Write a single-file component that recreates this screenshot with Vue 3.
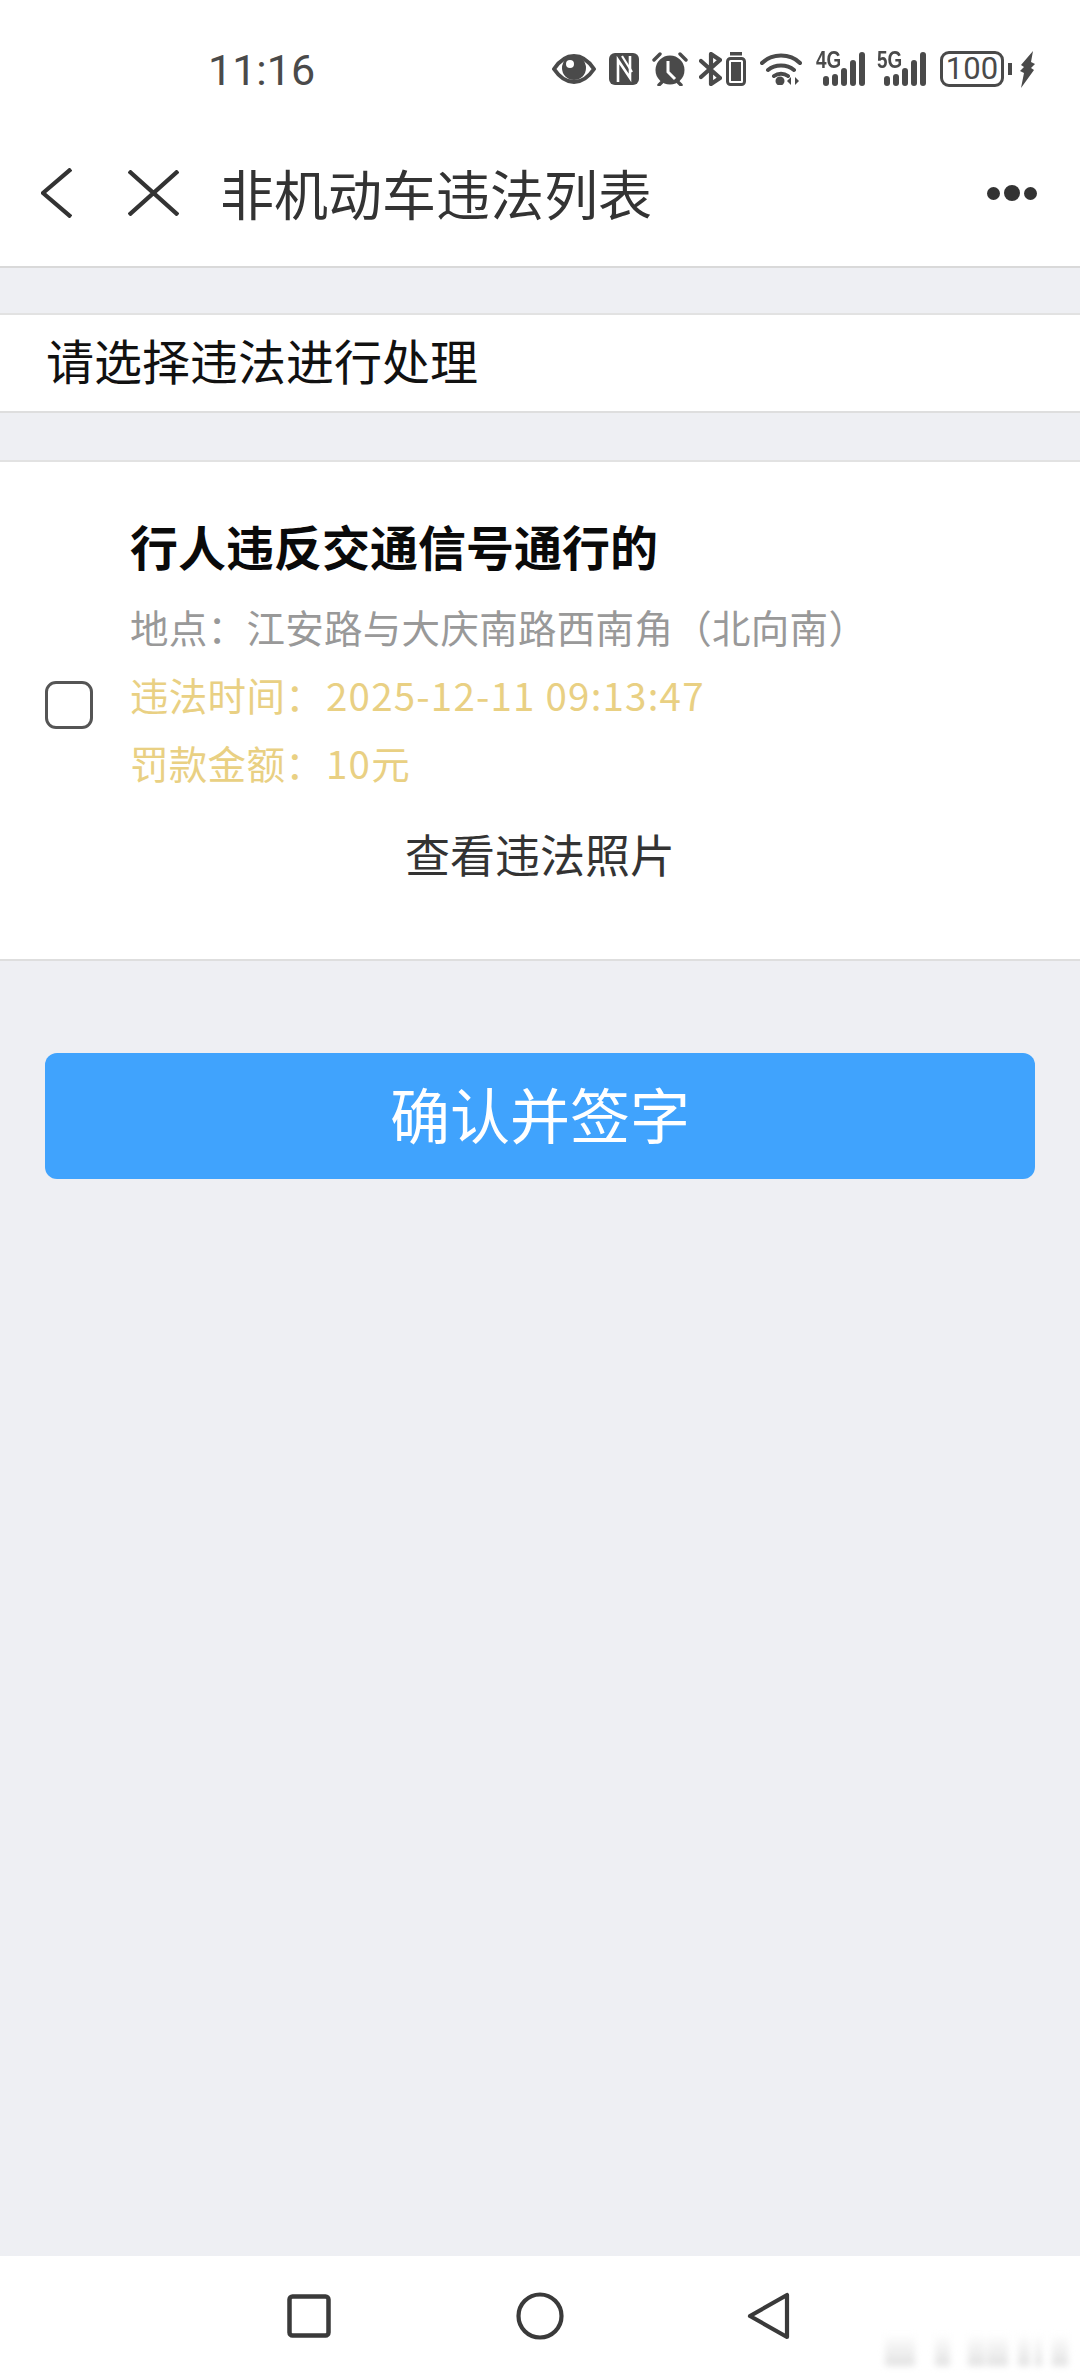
<template>
  <div class="page">
    <header class="top">
      <!-- status bar -->
      <div class="status">
        <span class="time">11:16</span>
        <div class="status-icons">
          <svg class="ic-eye" width="44" height="30" viewBox="0 0 44 30">
            <path d="M2 15C8 6 14 2 22 2s14 4 20 13c-6 9-12 13-20 13S8 24 2 15z" fill="none" stroke="#4a4a4a" stroke-width="4" stroke-linejoin="round" />
            <circle cx="22" cy="14" r="12" fill="#4a4a4a" />
            <circle cx="18" cy="10" r="4" fill="#fff" />
          </svg>
          <svg class="ic-nfc" width="30" height="32" viewBox="0 0 30 32">
            <rect width="30" height="32" rx="6" fill="#4a4a4a" />
            <path d="M9 29V7l12 18V3" fill="none" stroke="#fff" stroke-width="2.600" />
            <path d="M13 3l10 16" fill="none" stroke="#fff" stroke-width="2.200" />
          </svg>
          <svg class="ic-alarm" width="36" height="34" viewBox="0 0 36 34">
            <circle cx="18" cy="18" r="14.500" fill="#4a4a4a" />
            <path d="M16 9v11l7 7" fill="none" stroke="#fff" stroke-width="3" />
            <path d="M2 8l6-6M34 8l-6-6M7 33l4-4M29 33l-4-4" stroke="#4a4a4a" stroke-width="3.400" stroke-linecap="round" />
          </svg>
          <svg class="ic-bt" width="23" height="34" viewBox="0 0 23 34">
            <path d="M2 9l19 17-9 6V19M12 14V2l9 6L2 25" fill="none" stroke="#4a4a4a" stroke-width="4.200" stroke-linejoin="round" stroke-linecap="round" />
          </svg>
          <svg class="ic-saver" width="20" height="34" viewBox="0 0 20 34">
            <rect x="4" y="0" width="12" height="3.500" fill="#4a4a4a" />
            <rect x="1.500" y="6.500" width="17" height="26" rx="3" fill="none" stroke="#4a4a4a" stroke-width="3" />
            <rect x="5" y="10" width="10" height="19" fill="#4a4a4a" />
          </svg>
          <svg class="ic-wifi" width="42" height="32" viewBox="0 0 42 32">
            <path d="M2 10C12 0 30 0 40 10M8 17c7-6 19-6 26 0M14 23c4-3 10-3 14 0" fill="none" stroke="#4a4a4a" stroke-width="4" stroke-linecap="round" />
            <circle cx="20" cy="28" r="4.500" fill="#4a4a4a" />
            <path d="M31 24v8l-4-4zM35 24v8l4-4z" fill="#4a4a4a" />
          </svg>
          <div v-for="net in networks" :key="net" class="signal">
            <span class="net">{{ net }}</span>
            <i v-for="h in barHeights" :key="h" class="bar" :style="{ height: h + 'px' }"></i>
          </div>
          <div class="battery"><span>100</span></div>
          <i class="nub"></i>
          <svg class="ic-bolt" width="16" height="37" viewBox="0 0 16 37">
            <path d="M14 0L2 14l3 2-4 4 4 2-3 15 13-18-3-2 4-4-4-2z" fill="#4a4a4a" />
          </svg>
        </div>
      </div>
      <!-- title bar -->
      <div class="nav">
        <svg class="back" width="31" height="50" viewBox="0 0 31 50">
          <path d="M30 1L2 25l28 24" fill="none" stroke="#333" stroke-width="4.200" />
        </svg>
        <svg class="close" width="51" height="46" viewBox="0 0 51 46">
          <path d="M1 1l49 44M50 1L1 45" fill="none" stroke="#333" stroke-width="4.200" />
        </svg>
        <h1 class="title">非机动车违法列表</h1>
        <div class="more"><i></i><i class="mid"></i><i></i></div>
      </div>
    </header>

    <main class="main">
      <div class="hint">请选择违法进行处理</div>

      <section class="card">
        <span class="check"></span>
        <div class="info">
          <div class="reason">行人违反交通信号通行的</div>
          <div class="line place">地点：江安路与大庆南路西南角（北向南）</div>
          <div class="line warn">违法时间：<span class="num">2025-12-11 09:13:47</span></div>
          <div class="line warn">罚款金额：<span class="num">10</span>元</div>
        </div>
        <div class="photos">查看违法照片</div>
      </section>

      <button class="confirm" type="button">确认并签字</button>
    </main>

    <footer class="sysbar">
      <svg width="44" height="44" viewBox="0 0 44 44">
        <rect x="2.500" y="2.500" width="39" height="39" rx="3" fill="none" stroke="#3a3a3a" stroke-width="4.500" />
      </svg>
      <svg width="48" height="48" viewBox="0 0 48 48">
        <circle cx="24" cy="24" r="21.500" fill="none" stroke="#3a3a3a" stroke-width="4.200" />
      </svg>
      <svg width="43" height="48" viewBox="0 0 43 48">
        <path d="M40 3v42L3 24z" fill="none" stroke="#3a3a3a" stroke-width="4.200" stroke-linejoin="round" />
      </svg>
      <div class="mark">
        <i v-for="m in marks" :key="m.x + '-' + m.w" :style="{ width: m.w + 'px', marginLeft: m.x + 'px' }"></i>
      </div>
    </footer>
  </div>
</template>

<script setup>
const networks = ["4G", "5G"];
const barHeights = [10, 12, 18, 26, 34];
const marks = [
  { x: 0, w: 30 },
  { x: 20, w: 15 },
  { x: 18, w: 17 },
  { x: 2, w: 21 },
  { x: 10, w: 12 },
  { x: 5, w: 7 },
  { x: 10, w: 16 }
];
</script>

<style>
html,
body {
  margin: 0;
  background: #eeeff3;
}
</style>

<style scoped>
.page {
  width: 1080px;
  height: 2376px;
  display: flex;
  flex-direction: column;
  background: #eeeff3;
  font-family: "Noto Sans CJK SC", "Noto Sans", sans-serif;
}

/* ---------- top ---------- */
.top {
  height: 268px;
  box-sizing: border-box;
  background: #fff;
  border-bottom: 2px solid #d9d9d9;
}

.status {
  height: 100px;
  box-sizing: border-box;
  padding: 40px 45px 0 208px;
  display: flex;
  align-items: center;
  justify-content: space-between;
}

.time {
  font-family: Roboto, sans-serif;
  font-size: 43px;
  line-height: 60px;
  color: #4a4a4a;
}

.status-icons {
  display: flex;
  align-items: center;
  margin-top: -2px;
}

.ic-nfc { margin-left: 13px; }
.ic-alarm { margin-left: 13px; }
.ic-bt { margin-left: 11px; }
.ic-saver { margin-left: 4px; }
.ic-wifi { margin-left: 14px; }

.signal {
  position: relative;
  width: 49px;
  height: 34px;
  margin-left: 14px;
  display: flex;
  align-items: flex-end;
  justify-content: space-between;
  padding-left: 7px;
  box-sizing: border-box;
}

.signal + .signal {
  margin-left: 12px;
}

.net {
  position: absolute;
  left: 0;
  top: -3px;
  font-family: "Liberation Sans", sans-serif;
  font-size: 23px;
  line-height: 22px;
  font-weight: 700;
  color: #4a4a4a;
  transform: scaleX(0.82);
  transform-origin: left;
}

.bar {
  width: 6px;
  border-radius: 3px;
  background: #4a4a4a;
}

.battery {
  width: 64px;
  height: 36px;
  margin-left: 14px;
  box-sizing: border-box;
  border: 3.500px solid #4a4a4a;
  border-radius: 9px;
  display: flex;
  align-items: center;
  justify-content: center;
  color: #4a4a4a;
  font-family: Roboto, sans-serif;
  font-size: 31px;
  line-height: 30px;
}

.nub {
  width: 4px;
  height: 12px;
  margin-left: 4px;
  background: #4a4a4a;
}

.ic-bolt {
  margin-left: 7px;
}

.nav {
  height: 166px;
  box-sizing: border-box;
  display: flex;
  align-items: center;
  padding: 20px 43px 0 41px;
}

.close {
  margin-left: 56px;
}

.title {
  margin: 0 0 0 41px;
  flex: 1;
  font-size: 54px;
  font-weight: 400;
  line-height: 72px;
  color: #333;
}

.more {
  display: flex;
  align-items: center;
  gap: 4px;
}

.more i {
  width: 13px;
  height: 13px;
  border-radius: 50%;
  background: #333;
}

.more i.mid {
  width: 16px;
  height: 16px;
}

/* ---------- main ---------- */
.main {
  flex: 1;
  padding-top: 45px;
}

.hint {
  height: 100px;
  box-sizing: border-box;
  padding-left: 46px;
  background: #fff;
  border-top: 2px solid #e2e2e2;
  border-bottom: 2px solid #dedede;
  font-size: 48px;
  line-height: 88px;
  color: #111;
}

.card {
  margin-top: 47px;
  height: 501px;
  box-sizing: border-box;
  padding-top: 53px;
  background: #fff;
  border-top: 2px solid #e2e2e2;
  border-bottom: 2px solid #dedede;
  display: grid;
  grid-template-columns: 130px 1fr;
  grid-template-rows: auto auto;
  align-content: start;
}

.check {
  grid-column: 1;
  grid-row: 1 / 3;
  align-self: center;
  margin: 11px 0 0 45px;
  width: 48px;
  height: 48px;
  box-sizing: border-box;
  border: 3px solid #555;
  border-radius: 11px;
}

.info {
  grid-column: 2;
  grid-row: 1;
}

.reason {
  font-size: 48px;
  font-weight: 700;
  line-height: 60px;
  color: #0a0a0a;
  margin-bottom: 17px;
}

.line {
  font-size: 38.500px;
  line-height: 68px;
  letter-spacing: 0.300px;
  white-space: nowrap;
}

.place {
  color: #999;
}

.warn {
  color: #e9d083;
}

.num {
  margin-left: 2px;
  letter-spacing: 1.200px;
}

.photos {
  grid-column: 1 / -1;
  grid-row: 2;
  margin-top: 28px;
  text-align: center;
  font-size: 45px;
  line-height: 60px;
  color: #333;
}

.confirm {
  display: block;
  margin: 92px 45px 0;
  width: 990px;
  height: 126px;
  border: 0;
  border-radius: 12px;
  background: #40a3fd;
  color: #fff;
  font-family: inherit;
  font-size: 60px;
  padding: 0 0 8px;
}

/* ---------- system nav ---------- */
.sysbar {
  position: relative;
  height: 120px;
  background: #fff;
  display: flex;
  align-items: center;
  padding: 0 0 0 287px;
  box-sizing: border-box;
}

.sysbar svg:nth-child(2) {
  margin-left: 185px;
}

.sysbar svg:nth-child(3) {
  margin-left: 183px;
}

.mark {
  position: absolute;
  left: 885px;
  top: 78px;
  height: 32px;
  display: flex;
  filter: blur(3px);
}

.mark i {
  height: 100%;
  background: linear-gradient(to bottom, rgba(225, 225, 225, 0), #e2e2e2);
}
</style>
